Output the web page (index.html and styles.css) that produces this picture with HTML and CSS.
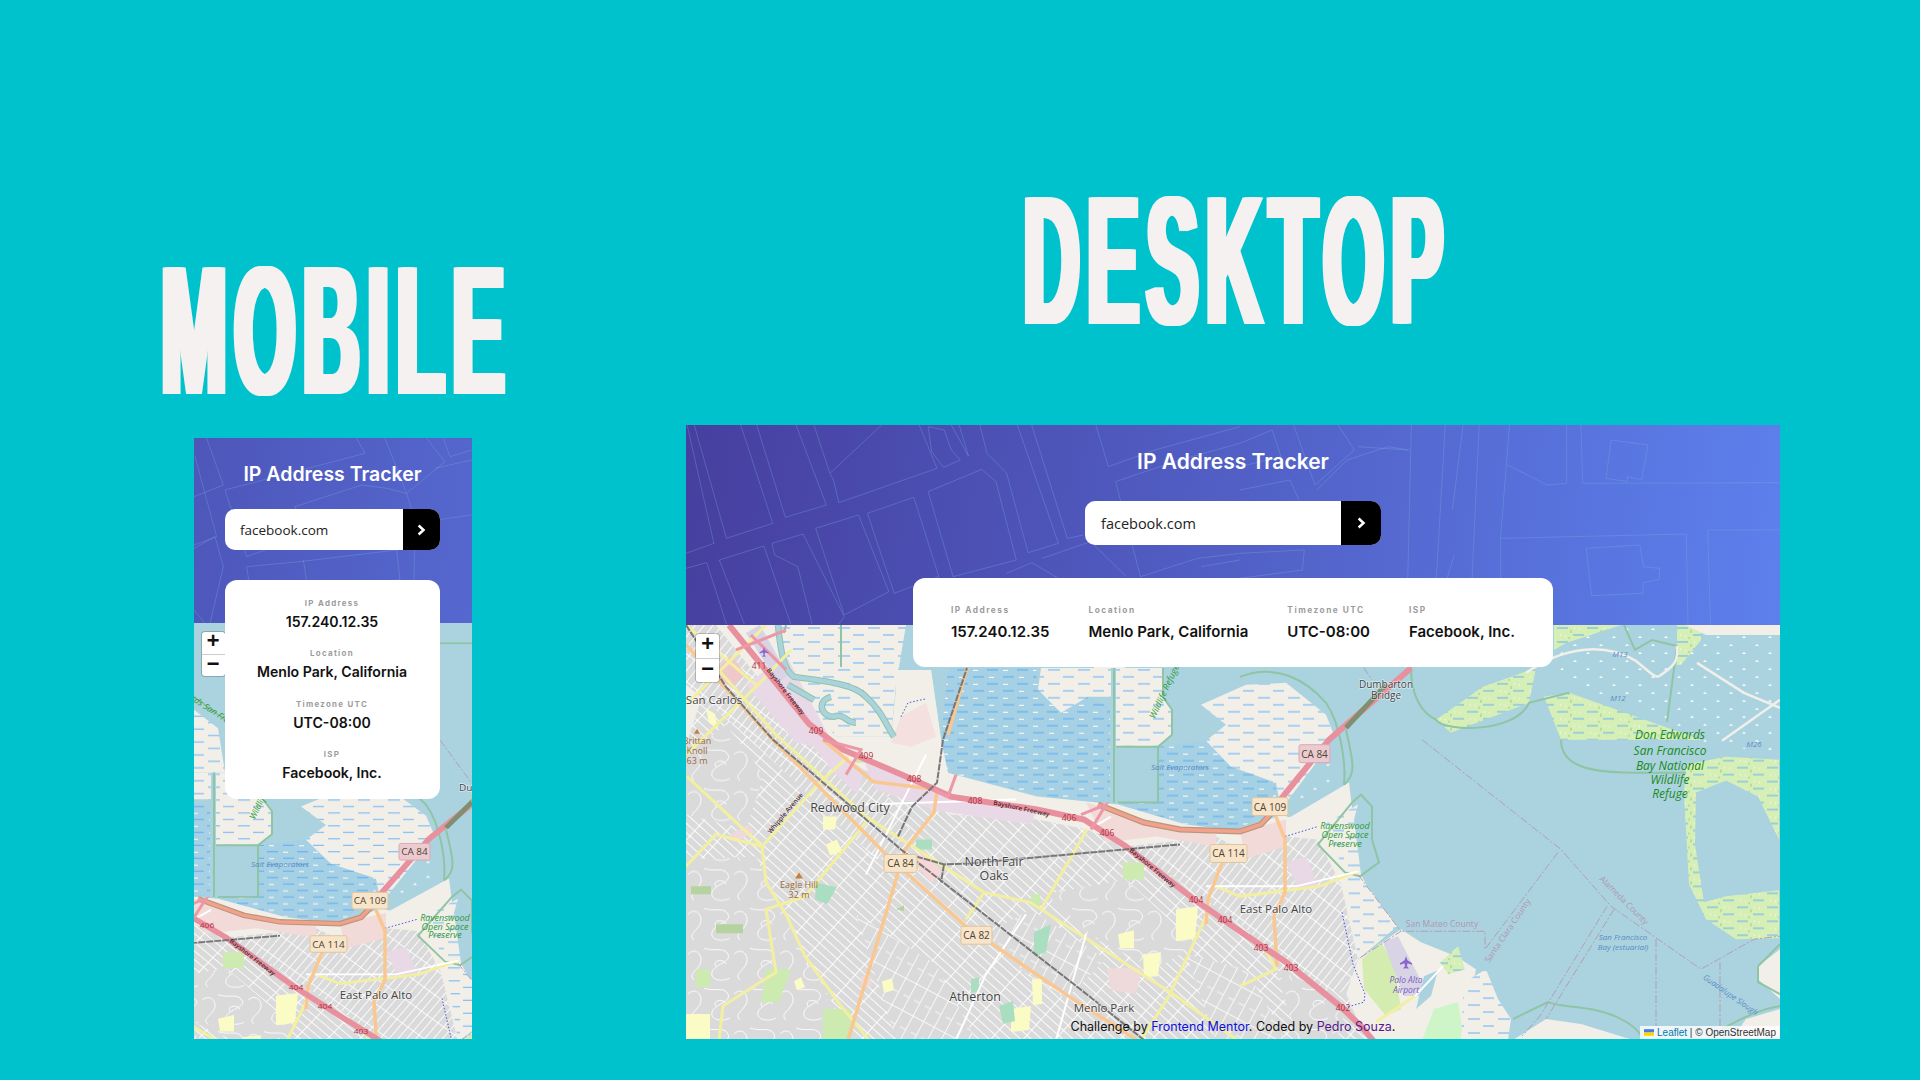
FILE: index.html
```html
<!DOCTYPE html>
<html lang="en">

<head>
    <meta charset="UTF-8">
    <meta name="viewport" content="width=device-width, initial-scale=1.0">
    <title>IP Address Tracker</title>
    <link rel="stylesheet" href="styles.css">
</head>

<body>
    <main class="stage">

        <section class="preview preview-mobile">
            <h2 class="preview-title title-mobile"><span>MOBILE</span></h2>
            <div class="frame frame-mobile">
                <header class="tracker-head">
                    <svg class="head-lines" viewBox="0 0 278 185" preserveAspectRatio="none" aria-hidden="true">
                        <g transform="translate(-14,-18) scale(.3333)">
                            <polyline points="80,55 130,195 42,230" />
                            <polyline points="45,110 110,350 42,375" />
                            <polyline points="135,210 200,410 380,345 345,260 545,195 620,205 680,220" />
                            <polyline points="135,210 555,100 530,55" />
                            <polyline points="615,55 680,220 795,125 740,55" />
                            <polyline points="790,55 810,110 875,90" />
                            <polyline points="765,145 875,120" />
                            <polyline points="680,220 705,300 700,610" />
                            <polyline points="42,385 105,350 130,440 90,610" />
                            <polyline points="42,570 75,610" />
                            <polyline points="200,440 360,425 650,390 660,480 370,500" />
                            <polyline points="200,440 225,610" />
                            <polyline points="370,420 400,610" />
                            <polyline points="770,300 875,285" />
                        </g>
                    </svg>
                    <h1 class="tracker-title">IP Address Tracker</h1>
                    <form class="search">
                        <span class="search-value">facebook.com</span>
                        <span class="search-btn">
                            <svg viewBox="0 0 11 14" aria-hidden="true"><path d="M2 1.5 8 7l-6 5.5" /></svg>
                        </span>
                    </form>
                </header>
                <div class="info-card">
                    <div class="stat"><span class="stat-label">IP Address</span><strong class="stat-value">157.240.12.35</strong></div>
                    <div class="stat"><span class="stat-label">Location</span><strong class="stat-value">Menlo Park, California</strong></div>
                    <div class="stat"><span class="stat-label">Timezone UTC</span><strong class="stat-value">UTC-08:00</strong></div>
                    <div class="stat"><span class="stat-label">ISP</span><strong class="stat-value">Facebook, Inc.</strong></div>
                </div>
                <div class="map">
                    <svg class="map-svg" viewBox="408 -119 278 451" preserveAspectRatio="none" role="img" aria-label="Map of Menlo Park">
                        <use href="#bay-map" />
                    </svg>
                    <div class="zoom-ctl"><span>+</span><span>−</span></div>
                </div>
            </div>
        </section>

        <section class="preview preview-desktop">
            <h2 class="preview-title title-desktop"><span>DESKTOP</span></h2>
            <div class="frame frame-desktop">
                <header class="tracker-head">
                    <svg class="head-lines" viewBox="0 0 1094 200" preserveAspectRatio="none" aria-hidden="true">
                        <g transform="translate(-6,-5) scale(.357,.3333)">
                            <polyline points="20,15 95,370 17,400" />
                            <polyline points="40,15 130,355 260,310 170,15" />
                            <polyline points="215,15 295,292 410,255 325,15" />
                            <polyline points="375,15 420,160 565,15" />
                            <polyline points="420,160 430,180 445,248 720,145 670,15" />
                            <polyline points="695,20 740,30 760,90 785,120 738,142 705,95 695,20" />
                            <polyline points="760,15 808,108 782,15" />
                            <polyline points="840,15 860,100 915,160 975,398 1060,370 945,15" />
                            <polyline points="985,15 1085,355 1130,345" />
                            <polyline points="695,215 845,148 885,185 942,420 765,470 695,215" />
                            <polyline points="525,280 655,232 725,470" />
                            <polyline points="525,280 600,520 725,470" />
                            <polyline points="380,325 500,285 585,515 460,585 380,325" />
                            <polyline points="258,370 345,342 460,590 445,612" />
                            <polyline points="258,370 265,405 330,440 370,612" />
                            <polyline points="110,420 235,378 310,612" />
                            <polyline points="110,420 180,612" />
                            <polyline points="17,445 75,428 130,612" />
                            <polyline points="1015,415 1150,365 1250,470" />
                            <polyline points="915,460 985,428 1060,475" />
                            <polyline points="1165,15 1200,140 1330,90 1568,20" />
                            <polyline points="1220,185 1400,120 1568,70" />
                            <polyline points="1220,185 1290,470" />
                            <polyline points="1290,470 1450,415 1568,400" />
                            <polyline points="1460,440 1568,420" />
                        </g>
                        <g transform="translate(554,-5) scale(.357,.3333)">
                            <polyline points="0,210 140,180 165,240" />
                            <polyline points="0,70 90,30 115,110 0,140" />
                            <polyline points="150,15 210,195 320,90 275,15" />
                            <polyline points="215,210 300,120 415,80 475,90" />
                            <polyline points="330,80 470,90" />
                            <polyline points="480,15 470,475" />
                            <polyline points="575,15 550,475" />
                            <polyline points="625,15 595,270" />
                            <polyline points="670,15 650,475" />
                            <polyline points="755,15 730,350 730,475" />
                            <polyline points="750,135 860,195 915,190 915,15" />
                            <polyline points="955,15 960,190 1510,188" />
                            <polyline points="1040,60 1143,75 1125,180 1085,170 1085,185 1025,175 1040,60" />
                            <polyline points="730,355 1250,342 1255,615" />
                            <polyline points="970,385 1120,375 1130,440 1175,445 1175,478 1130,488 1128,520 985,527 970,385" />
                            <polyline points="1310,330 1510,330" />
                            <polyline points="1310,330 1318,615" />
                            <polyline points="600,405 580,475" />
                            <polyline points="0,400 180,390 175,450 0,475" />
                        </g>
                    </svg>
                    <h1 class="tracker-title">IP Address Tracker</h1>
                    <form class="search">
                        <span class="search-value">facebook.com</span>
                        <span class="search-btn">
                            <svg viewBox="0 0 11 14" aria-hidden="true"><path d="M2 1.5 8 7l-6 5.5" /></svg>
                        </span>
                    </form>
                </header>
                <div class="info-card">
                    <div class="stat"><span class="stat-label">IP Address</span><strong class="stat-value">157.240.12.35</strong></div>
                    <div class="stat"><span class="stat-label">Location</span><strong class="stat-value">Menlo Park, California</strong></div>
                    <div class="stat"><span class="stat-label">Timezone UTC</span><strong class="stat-value">UTC-08:00</strong></div>
                    <div class="stat"><span class="stat-label">ISP</span><strong class="stat-value">Facebook, Inc.</strong></div>
                </div>
                <div class="map">
                    <svg class="map-svg" viewBox="0 0 1094 415" preserveAspectRatio="none" role="img" aria-label="Map of Menlo Park">
                        <defs>
                            <pattern id="wet" width="30" height="14" patternUnits="userSpaceOnUse">
                                <rect width="30" height="14" fill="#f2efe9" />
                                <path d="M2 3h12M17 10h11" stroke="#63b0f6" stroke-width="1" />
                            </pattern>
                            <pattern id="pond" width="30" height="14" patternUnits="userSpaceOnUse">
                                <rect width="30" height="14" fill="#a6d0e4" />
                                <path d="M1 3h11M17 10h11" stroke="#58aaf2" stroke-width="1" />
                                <path d="M17 3.5h5M3 10.5h5" stroke="#fff" stroke-width="1" />
                            </pattern>
                            <pattern id="marsh" width="30" height="14" patternUnits="userSpaceOnUse">
                                <rect width="30" height="14" fill="#d6efb6" />
                                <path d="M1 3h11M17 10h11" stroke="#63b0f6" stroke-width="1" />
                                <path d="M18 3h1M23 4h1M4 10h1M9 11h1" stroke="#fff" stroke-width="1.2" />
                                <path d="M15 5v3M13 12v2" stroke="#9cc98a" stroke-width="1" />
                            </pattern>
                            <pattern id="salt" width="26" height="16" patternUnits="userSpaceOnUse">
                                <rect width="26" height="16" fill="#aad3df" />
                                <path d="M3 5l2-2 2 2zM16 13l2-2 2 2z" fill="#fff" />
                            </pattern>
                            <pattern id="streets" width="24" height="7" patternUnits="userSpaceOnUse" patternTransform="rotate(42)">
                                <rect width="24" height="7" fill="#dadada" />
                                <path d="M0 .5H24M.5 0V7" stroke="#fff" stroke-width=".9" />
                            </pattern>
                            <pattern id="streets-alt" width="7" height="22" patternUnits="userSpaceOnUse" patternTransform="rotate(38)">
                                <rect width="7" height="22" fill="#dadada" />
                                <path d="M.5 0V22M0 .5H7" stroke="#fff" stroke-width=".9" />
                            </pattern>
                            <pattern id="streets-cross" width="30" height="12" patternUnits="userSpaceOnUse" patternTransform="rotate(-62)">
                                <rect width="30" height="12" fill="#dadada" />
                                <path d="M0 .5H30M.5 0V12M15 6V12" stroke="#fff" stroke-width=".8" />
                            </pattern>
                            <pattern id="curvy" width="46" height="40" patternUnits="userSpaceOnUse">
                                <rect width="46" height="40" fill="#dadada" />
                                <path d="M2 10c8-8 16 2 12 10s-12 10-6 16M18 4c10 4 20-2 24 6s-14 10-16 18 10 10 18 6M30 22c-4-6 8-8 10-2" fill="none" stroke="#fff" stroke-width=".9" />
                            </pattern>
                            <g id="bay-map">
                                <rect x="-10" y="-130" width="1120" height="560" fill="#aad3df" />

                                <!-- ponds and marsh -->
                                <path d="M868 25 880 18 935 0H1094V130L1020 118 960 85 880 60Z" fill="url(#salt)" />
                                <path d="M92 0H220L210 60 205 112H150L118 80 102 45Z" fill="url(#wet)" />
                                <path d="M262 43H350L352 65 375 88 402 72 424 82V177H401L351 170 262 148 255 115Z" fill="url(#pond)" />
                                <path d="M432 178H472V122L520 116 545 142 590 158V175L555 205 500 200 458 192Z" fill="url(#pond)" />
                                <path d="M430 43H477V72L486 85V110L472 122H430Z" fill="url(#wet)" />
                                <path d="M515 80 560 60 600 58 640 90 648 110 640 125 595 185 590 158 545 142 520 116 540 100Z" fill="url(#wet)" />
                                <path d="M408 -25 432 -5 439 43H408Z" fill="url(#wet)" />
                                <path d="M355 43H425V72L402 72 375 88 352 65Z" fill="url(#wet)" />
                                <path d="M556 178a15 12 0 1 1 28-6l-8 8z" fill="url(#pond)" />
                                <path d="M607 178 642 135 658 158 650 178 625 190Z" fill="url(#salt)" />
                                <path d="M600 195 663 158 668 200 632 212Z" fill="#f2efe9" />
                                <path d="M630 205 672 180 668 195 675 250 680 260 711 302 690 320 672 335 660 300 650 240Z" fill="url(#wet)" />
                                <path d="M750 95 797 62 850 43 843 78 765 108Z" fill="url(#marsh)" />
                                <path d="M858 72 883 68 1015 115H875Z" fill="url(#marsh)" />
                                <path d="M868 0H935L880 18 868 25Z" fill="url(#marsh)" />
                                <path d="M991 0H1015V15L995 40H991Z" fill="url(#marsh)" />
                                <path d="M1000 140 1040 132 1093 135V215L1072 172 1040 156 1010 168 1009 220 1018 278 1040 272 1093 266V314L1050 315 1020 295 1003 260 998 170Z" fill="url(#marsh)" />
                                <path d="M1000 0H1094V10H1020Z" fill="#f2efe9" />
                                <path d="M1072 342 1094 325V375L1072 355Z" fill="#f2efe9" />
                                <path d="M1045 416 1060 395 1094 385V416Z" fill="#f2efe9" />
                                <path d="M827 416 860 395 895 400 947 416Z" fill="#f2efe9" />

                                <!-- airport -->
                                <path d="M672 335 715 305 735 318 770 332 790 345 775 416 680 416 660 370Z" fill="#f2efe9" />
                                <path d="M676 335 695 318 708 340 715 385 700 392 678 365Z" fill="#d5ecb0" />
                                <path d="M697 318 712 312 738 362 735 372 718 372Z" fill="#d8d4e6" />
                                <path d="M736 416 748 385 772 378 778 416Z" fill="#cdf5c8" />
                                <path d="M754 338 772 322 779 345 762 350Z" fill="url(#marsh)" />
                                <path d="M778 358 800 345 812 375 825 395 822 416H775Z" fill="url(#wet)" />
                                <path d="M738 352 752 346 745 372 730 385Z" fill="#aad3df" />

                                <!-- town -->
                                <path d="M0 0H92L100 50 150 112H205L212 45H245L255 115 262 148 351 172 401 177 432 180 500 200 555 207 595 190 640 205 660 250 672 335 660 370 680 416H0Z" fill="#f2efe9" />
                                <path d="M0 120 20 60 60 60 130 125 190 150 265 190 351 195 401 205 470 230 554 300 640 350 660 370 680 416H0Z" fill="url(#streets)" />
                                <path d="M0 0H30L90 75 150 125 200 170 235 220 190 235 60 110 0 60Z" fill="url(#streets-alt)" />
                                <path d="M554 225 600 212 632 215 655 260 672 335 660 370 625 360 554 300Z" fill="url(#streets-alt)" />
                                <path d="M440 222 530 212 554 225 554 300 470 240Z" fill="url(#streets-alt)" />
                                <path d="M170 290 250 340 290 416H210Z" fill="url(#streets-cross)" />
                                <path d="M300 310 345 285 420 335 380 375 340 350Z" fill="url(#streets-cross)" />
                                <path d="M500 330 560 345 600 416H530Z" fill="url(#streets-cross)" />
                                <path d="M0 235 70 232 100 295 150 385 170 416H0Z" fill="url(#curvy)" />
                                <path d="M0 130 40 100 78 150 60 205 0 190Z" fill="url(#curvy)" />
                                <path d="M360 270 440 255 510 320 470 345 410 315Z" fill="url(#curvy)" />
                                <path d="M590 345 625 360 660 385 650 416H610Z" fill="url(#curvy)" />
                                <path d="M60 60 100 30 150 125 110 118Z M110 100 178 145 172 170 150 150Z" fill="#e9d9e7" />
                                <path d="M175 130 250 168 350 188 345 200 250 186 190 165Z" fill="#e9d9e7" />
                                <path d="M226 236 240 228 256 248 246 258Z" fill="#f6d6d6" />
                                <path d="M400 178 470 198 530 210 530 222 470 212 420 218Z" fill="#f2dad9" />
                                <path d="M554 207 600 195 600 222 560 234Z" fill="#f2dad9" />
                                <path d="M600 238 620 232 632 262 612 264Z" fill="#e9d9e7" />
                                <path d="M210 45H245L255 115 210 112Z" fill="#f2efe9" />
                                <path d="M215 92 240 78 250 112 225 122 205 118Z" fill="#f3e0df" />
                                <path d="M25 50 45 30 60 50 45 62Z" fill="#efc9c9" />
                                <path d="M60 8 74 0 102 50 92 58Z" fill="#d8d4e6" />

                                <!-- parks -->
                                <g class="map-parks">
                                    <path class="park-y" d="M137 192h14l-2 13h-12zM140 220l11-5 5 12-12 4zM490 285l22-3-3 32-19 3zM457 330l18-2-3 24-14 1zM432 310l16-4v18h-14zM346 355l10-1v26l-9 1zM325 385l20-3-2 24-18 2zM20 84l9 5 3 15-9-6zM196 357l10-3 2 12-10 3zM108 357l7-4 4 10-8 3zM0 390h24v25H0z" />
                                    <path class="park-g" d="M80 345h25l-12 33H75zM137 385h28v30h-28zM437 238h21v17h-21zM10 345h14v18H10zM345 270h9v12h-9zM170 130h10v8h-10z" />
                                    <path class="park-t" d="M130 258l21 5-10 17-12-5zM348 308l17-8-5 28-12 4zM313 382l14-5 2 20-12 3zM230 215h16v10h-16zM285 355l8-2v14l-8 2z" />
                                    <path class="park-h" d="M5 262h20v8H5zM30 300h27v9H30zM210 285l8-4v6z" />
                                    <path class="park-p" d="M421 344h35l-6 26-25-4zM175 352h10v10h-10zM44 210l18-10 6 8-20 10z" />
                                </g>

                                <g class="map-bound">
                                    <path d="M100 0 98 8M155 0V42" />
                                    <path d="M428 43V178" />
                                    <path d="M477 43V72L486 85V110L472 122" />
                                    <path d="M554 52C590 38 620 55 640 78 655 100 660 140 658 160" />
                                    <path d="M725 30V43C725 70 735 88 750 95 760 108 830 108 843 78L883 68" />
                                    <path d="M875 115C875 140 900 148 947 148H1000" />
                                    <path d="M632 220 666 178 675 170 686 182V215L693 238 674 252 659 248Z" />
                                    <path d="M938 0 949 25 966 15 991 21 981 97" />
                                    <path d="M408 -39 439 -14" />
                                    <path d="M654 -97H686" />
                                    <path d="M827 395 862 378C880 385 905 380 935 395 950 402 955 410 958 416" />
                                    <path d="M1072 342 1094 320M1094 370 1072 358 1072 342" />
                                    <path d="M1036 405C1060 392 1075 385 1094 382" />
                                    <path d="M660 105C668 140 670 150 658 160" />
                                    <path d="M430 122H472V178H432" />
                                </g>
                                <!-- tidal channels, drawn twice for the green bank -->
                                <g class="map-bank">
                                    <path d="M92 0C95 30 98 45 108 52 140 56 170 60 180 72 195 85 200 100 208 112" />
                                    <path d="M145 72C130 76 135 92 148 92 158 88 160 98 170 98" />
                                    <path d="M102 60 128 75" />
                                </g>
                                <g class="map-water">
                                    <path d="M92 0C95 30 98 45 108 52 140 56 170 60 180 72 195 85 200 100 208 112" />
                                    <path d="M145 72C130 76 135 92 148 92 158 88 160 98 170 98" />
                                    <path d="M102 60 128 75" />
                                </g>
                                <path d="M1011 38 1058 68 1094 83M1094 75 1036 116" class="map-track" />
                                <path d="M840 48C880 20 920 18 950 36 965 48 970 55 975 50 990 40 992 35 991 21" class="map-track" />

                                <!-- dashed boundaries -->
                                <g class="map-county">
                                    <path d="M736 115 875 225 925 282 1015 345 1068 315 1094 312" />
                                    <path d="M872 228 799 325V307H715" />
                                    <path d="M921 282 854 392 836 412M928 285 860 395" />
                                    <path d="M970 315V402M1034 338V402" />
                                    <path d="M654 8 686 55" />
                                    <path d="M672 250 711 302 715 307 672 335" />
                                </g>
                                <path d="M215 92 222 78 240 74M599 212 632 202M656 288 667 340 679 370 678 378 655 385" class="map-dots" />

                                <!-- roads -->
                                <g class="road road-yellow">
                                    <path d="M1 152 76 222 130 162 162 132" />
                                    <path d="M-6 248 30 210 76 222 80 258 101 292 119 332 155 382 183 416" />
                                    <path d="M33 416 37 382 90 348 80 285 119 272 180 198" />
                                    <path d="M28 40 90 110 180 192 298 268 344 278 490 372 551 416" />
                                    <path d="M0 80 50 30 80 0" />
                                    <path d="M0 130 70 62 105 25" />
                                    <path d="M70 60 0 0" />
                                    <path d="M401 205 355 285" />
                                    <path d="M522 288 483 372 455 416" />
                                    <path d="M530 262 554 272 633 262 672 247" />
                                    <path d="M554 362 590 345 575 318" />
                                    <path d="M690 398 729 372" />
                                    <path d="M298 268 280 295" />
                                </g>
                                <g class="road road-white">
                                    <path d="M729 372 757 342" />
                                    <path d="M672 247 610 262 520 262" />
                                    <path d="M180 180 330 175" />
                                    <path d="M405 204 425 192" />
                                    <path d="M340 290 300 350 270 416M400 310 370 416M240 130 180 250" />
                                </g>
                                <g class="road road-orange">
                                    <path d="M0 20 87 115 198 228 280 302 387 375 451 416" />
                                    <path d="M162 416 205 272 219 225 248 188 251 165 187 157 137 115" />
                                    <path d="M590 192 599 215V268L588 292 591 342" />
                                    <path d="M540 228 522 275 520 300" />
                                    <path d="M281 43 262 110" />
                                </g>
                                <path class="road-salmon-edge" d="M412 180 458 198 494 205 554 207 575 200 595 178" />
                                <path class="road-salmon" d="M412 180 458 198 494 205 554 207 575 200 595 178" />
                                <path class="road-motorway" d="M43 0 77 42 123 99 157 125 223 153 265 172 351 185 398 195 440 222 508 275 554 307 600 338 654 382 675 402 690 420" />
                                <path class="road-motorway" d="M592 178 643 115 725 43" />
                                <path class="road-ramp" d="M137 115 175 125 160 150M100 45 65 10M50 25 100 5M248 165 262 172 270 150M395 190 420 180 405 205" />
                                <path class="road-bridge" d="M660 103 700 60" />
                                <g class="road-rail">
                                    <path d="M0 0 40 62 87 115 215 225 398 368 458 416" />
                                    <path d="M230 232 258 240 283 239 494 220" />
                                    <path d="M212 212 226 182 251 158 257 115 281 43" />
                                    <path d="M258 240 255 258" />
                                </g>

                                <!-- labels -->
                                <g class="shield"><rect x="198" y="230" width="33" height="18" rx="2" /><text x="214.500" y="243">CA 84</text></g>
                                <g class="shield"><rect x="275" y="302" width="31" height="18" rx="2" /><text x="290.500" y="315">CA 82</text></g>
                                <g class="shield"><rect x="524" y="220" width="37" height="18" rx="2" /><text x="542.500" y="233">CA 114</text></g>
                                <g class="shield"><rect x="566" y="173" width="36" height="18" rx="2" /><text x="584" y="186">CA 109</text></g>
                                <g class="shield shield-pink"><rect x="613" y="120" width="31" height="18" rx="2" /><text x="628.500" y="133">CA 84</text></g>

                                <g class="label-ref">
                                    <text x="73" y="44">411</text><text x="130" y="109">409</text><text x="180" y="134">409</text>
                                    <text x="228" y="157">408</text><text x="289" y="179">408</text><text x="383" y="196">406</text>
                                    <text x="421" y="212">406</text><text x="510" y="279">404</text><text x="539" y="299">404</text>
                                    <text x="575" y="327">403</text><text x="605" y="347">403</text><text x="657" y="387">402</text>
                                </g>
                                <g class="label-road">
                                    <text transform="translate(98,68) rotate(52)">Bayshore Freeway</text>
                                    <text transform="translate(335,186) rotate(12)">Bayshore Freeway</text>
                                    <text transform="translate(465,245) rotate(40)">Bayshore Freeway</text>
                                    <text transform="translate(101,190) rotate(-50)">Whipple Avenue</text>
                                </g>

                                <g class="label-place">
                                    <text x="28" y="79">San Carlos</text>
                                    <text x="164" y="187" class="place-big">Redwood City</text>
                                    <text x="308" y="242" class="place-big">North Fair</text>
                                    <text x="308" y="256" class="place-big">Oaks</text>
                                    <text x="289" y="377" class="place-big">Atherton</text>
                                    <text x="418" y="388">Menlo Park</text>
                                    <text x="590" y="289">East Palo Alto</text>
                                    <text x="700" y="63" class="place-small">Dumbarton</text>
                                    <text x="700" y="74" class="place-small">Bridge</text>
                                </g>
                                <g class="label-peak">
                                    <path d="M113 248l4 6h-8zM11 104l3 5H8z" />
                                    <text x="113" y="264">Eagle Hill</text><text x="113" y="274">32 m</text>
                                    <text x="11" y="119">Brittan</text><text x="11" y="129">Knoll</text><text x="11" y="139">63 m</text>
                                </g>
                                <g class="label-reserve">
                                    <text x="659" y="204">Ravenswood</text><text x="659" y="214">Open Space</text><text x="659" y="223">Preserve</text>
                                    <text transform="translate(481,68) rotate(-65)">Wildlife Refuge</text>
                                    <text transform="translate(424,-22) rotate(35)">Edwards San Francisco</text>
                                </g>
                                <g class="label-refuge">
                                    <text x="984" y="114">Don Edwards</text><text x="984" y="130">San Francisco</text>
                                    <text x="984" y="145">Bay National</text><text x="984" y="159">Wildlife</text><text x="984" y="173">Refuge</text>
                                </g>
                                <g class="label-county">
                                    <text x="756" y="303">San Mateo County</text>
                                    <text transform="translate(824,308) rotate(-56)">Santa Clara County</text>
                                    <text transform="translate(936,278) rotate(45)">Alameda County</text>
                                </g>
                                <g class="label-water">
                                    <text x="937" y="316">San Francisco</text><text x="937" y="326">Bay (estuarial)</text>
                                    <text transform="translate(1043,373) rotate(35)">Guadalupe Slough</text>
                                    <text x="494" y="145">Salt Evaporators</text>
                                    <text x="934" y="32">M13</text><text x="932" y="76">M12</text><text x="1068" y="122">M26</text>
                                </g>
                                <g class="label-airport">
                                    <path d="M720 332l1.500 4 4.500 3v1.500l-4.500-1.500-.5 3 1.500 1.500v1l-2.500-.5-2.500.5v-1l1.500-1.500-.5-3-4.500 1.500V339l4.500-3z" />
                                    <path d="M78 22l1 3 3.500 2.500v1l-3.500-1-.5 2.500 1 1v1l-1.500-.5-1.500.5v-1l1-1-.5-2.500-3.500 1v-1l3.500-2.500z" />
                                    <text x="720" y="359">Palo Alto</text><text x="720" y="369">Airport</text>
                                </g>
                            </g>
                        </defs>
                        <use href="#bay-map" />
                    </svg>
                    <div class="zoom-ctl"><span>+</span><span>−</span></div>
                    <p class="credit">Challenge by <a class="credit-link" href="#">Frontend Mentor</a>. Coded by <a class="credit-visited" href="#">Pedro Souza</a>.</p>
                    <div class="attribution">
                        <svg class="flag" viewBox="0 0 12 8" aria-hidden="true"><rect width="12" height="4" fill="#4C7BE1" /><rect y="4" width="12" height="4" fill="#FFD500" /></svg>
                        <span><a href="#">Leaflet</a> | © OpenStreetMap</span>
                    </div>
                </div>
            </div>
        </section>

    </main>
</body>

</html>
```

FILE: styles.css
```css
* {
    box-sizing: border-box;
}

body {
    margin: 0;
    padding: 0;
    background-color: #00c2cc;
}

.stage {
    display: flex;
    align-items: flex-end;
    height: 1080px;
    padding: 0 0 41px 159px;
    gap: 180px;
    overflow: hidden;
}

.preview {
    display: flex;
    flex-direction: column;
    align-items: center;
}

.preview-mobile {
    width: 347px;
}

.preview-desktop {
    width: 1094px;
}

/* no condensed face installed, so the bold is squeezed and thickened sideways */
.preview-title {
    display: flex;
    justify-content: center;
    width: 100%;
    margin: 0;
    font-family: "Liberation Sans", sans-serif;
    font-size: 184px;
    line-height: 130px;
    font-weight: 700;
    letter-spacing: 18px;
    color: #f5f1f0;
    white-space: nowrap;
    text-shadow: 9px 0 0 #f5f1f0, -9px 0 0 #f5f1f0, 4.500px 0 0 #f5f1f0, -4.500px 0 0 #f5f1f0;
}

.preview-title span {
    display: inline-block;
    flex: none;
}

.title-mobile {
    margin-bottom: 43px;
}

.title-mobile span {
    transform: translateX(4px) scaleX(.426);
}

.title-desktop {
    margin-bottom: 100px;
}

.title-desktop span {
    transform: translateX(4px) scaleX(.422);
}

.frame {
    position: relative;
    overflow: hidden;
    display: flex;
    flex-direction: column;
}

.frame-mobile {
    width: 278px;
    height: 601px;
}

.frame-desktop {
    width: 1094px;
    height: 614px;
}

.tracker-head {
    position: relative;
    flex: none;
    display: flex;
    flex-direction: column;
    align-items: center;
}

.frame-mobile .tracker-head {
    height: 185px;
    padding-top: 25px;
    background: linear-gradient(100deg, #4e56b9, #5568cf);
}

.frame-desktop .tracker-head {
    height: 200px;
    padding-top: 25px;
    background: linear-gradient(96deg, #463f9f, #5d80ec);
}

.head-lines {
    position: absolute;
    top: 0;
    left: 0;
    width: 100%;
    height: 100%;
}

.head-lines polyline {
    fill: none;
    stroke: #7db4e6;
    stroke-opacity: .3;
    stroke-width: 1;
    vector-effect: non-scaling-stroke;
}

.tracker-title {
    position: relative;
    margin: 0;
    font-family: Inter, sans-serif;
    font-weight: 600;
    color: #fff;
}

.frame-mobile .tracker-title {
    font-size: 19.500px;
    line-height: 22px;
}

.frame-desktop .tracker-title {
    font-size: 21px;
    line-height: 24px;
}

.search {
    position: relative;
    display: flex;
    margin: 0;
    overflow: hidden;
    background-color: #fff;
    border-radius: 10px;
    font-family: "Open Sans", sans-serif;
    color: #222;
}

.frame-mobile .search {
    width: 215px;
    height: 41px;
    margin-top: 24px;
    font-size: 13.500px;
}

.frame-desktop .search {
    width: 296px;
    height: 44px;
    margin-top: 27px;
    font-size: 14.500px;
}

.search-value {
    flex: 1;
    display: flex;
    align-items: center;
}

.frame-mobile .search-value {
    padding-left: 15px;
}

.frame-desktop .search-value {
    padding-left: 16px;
}

.search-btn {
    flex: none;
    display: flex;
    align-items: center;
    justify-content: center;
    background-color: #000;
}

.frame-mobile .search-btn {
    width: 37px;
}

.frame-desktop .search-btn {
    width: 40px;
}

.search-btn svg {
    width: 9px;
    height: 12px;
}

.search-btn path {
    fill: none;
    stroke: #fff;
    stroke-width: 3;
}

.info-card {
    position: absolute;
    z-index: 5;
    background-color: #fff;
    border-radius: 12px;
    font-family: Inter, sans-serif;
    color: #111;
}

.frame-mobile .info-card {
    top: 142px;
    left: 31px;
    width: 215px;
    height: 219px;
    padding-top: 17px;
    display: flex;
    flex-direction: column;
    align-items: center;
    gap: 15.400px;
    text-align: center;
}

.frame-desktop .info-card {
    top: 153px;
    left: 227px;
    width: 640px;
    height: 89px;
    padding: 26px 38px 0;
    display: flex;
    justify-content: space-between;
}

.stat {
    display: flex;
    flex-direction: column;
}

.frame-mobile .stat {
    gap: 3px;
}

.frame-desktop .stat {
    gap: 6px;
}

.stat-label {
    font-weight: 700;
    color: #9c9c9c;
    line-height: 12px;
}

.frame-mobile .stat-label {
    font-size: 7.900px;
    letter-spacing: 1.300px;
}

.frame-desktop .stat-label {
    font-size: 8.300px;
    letter-spacing: 1.500px;
}

.stat-value {
    font-weight: 600;
    white-space: nowrap;
}

.frame-mobile .stat-value {
    font-size: 14.100px;
    line-height: 20px;
}

.frame-desktop .stat-value {
    font-size: 15px;
    line-height: 20px;
}

.map {
    position: relative;
    flex: 1;
    overflow: hidden;
}

.map-svg {
    display: block;
    width: 100%;
    height: 100%;
}

.zoom-ctl {
    position: absolute;
    z-index: 3;
    display: flex;
    flex-direction: column;
    width: 23px;
    background-color: #fff;
    border-radius: 3px;
    box-shadow: 0 0 0 1px rgba(0, 0, 0, .2);
    font-family: "Liberation Mono", monospace;
    font-weight: 700;
    font-size: 22px;
    color: #111;
    text-align: center;
}

.zoom-ctl span + span {
    border-top: 1px solid #ccc;
}

.frame-mobile .zoom-ctl {
    top: 9px;
    left: 8px;
}

.frame-mobile .zoom-ctl span {
    height: 22px;
    line-height: 22px;
}

.frame-desktop .zoom-ctl {
    top: 9px;
    left: 10px;
}

.frame-desktop .zoom-ctl span {
    height: 24px;
    line-height: 24px;
}

.credit {
    position: absolute;
    z-index: 3;
    left: 0;
    right: 0;
    bottom: 3px;
    margin: 0;
    font-family: Inter, sans-serif;
    font-size: 12.500px;
    line-height: 18px;
    color: #111;
    text-align: center;
}

.credit-link {
    color: #1010e0;
    text-decoration: none;
}

.credit-visited {
    color: #551a8b;
    text-decoration: none;
}

.attribution {
    position: absolute;
    z-index: 3;
    right: 0;
    bottom: 0;
    display: flex;
    align-items: center;
    gap: 3px;
    height: 13px;
    padding: 0 4px;
    background-color: rgba(255, 255, 255, .8);
    font-family: "Liberation Sans", sans-serif;
    font-size: 10px;
    line-height: 13px;
    color: #333;
    white-space: nowrap;
}

.attribution a {
    color: #0078a8;
    text-decoration: none;
}

.flag {
    width: 10px;
    height: 7px;
}

/* map layers */
.road,
.road-motorway,
.road-ramp,
.road-rail,
.road-salmon,
.road-salmon-edge,
.road-bridge,
.map-bound,
.map-bank,
.map-water,
.map-county,
.map-track,
.map-dots {
    fill: none;
}

.road-yellow {
    stroke: #f2f0a0;
    stroke-width: 3;
}

.road-white {
    stroke: #fff;
    stroke-width: 2;
}

.road-orange {
    stroke: #f9c78f;
    stroke-width: 3.500;
}

.road-motorway {
    stroke: #e9909f;
    stroke-width: 6;
}

.road-ramp {
    stroke: #ec98a6;
    stroke-width: 3;
}

.road-salmon-edge {
    stroke: #b9977a;
    stroke-width: 6;
}

.road-salmon {
    stroke: #f3a18c;
    stroke-width: 3.500;
}

.road-bridge {
    stroke: #7f8f70;
    stroke-width: 5;
}

.road-rail {
    stroke: #777;
    stroke-width: 2;
    stroke-dasharray: 7 1;
}

.map-bound {
    stroke: #8fc4a4;
    stroke-width: 2;
}

.map-bank {
    stroke: #8fc4a4;
    stroke-width: 6.500;
}

.map-water {
    stroke: #aad3df;
    stroke-width: 4.500;
}

.map-track {
    stroke: #f2efe9;
    stroke-width: 2.500;
}

.map-county {
    stroke: #b59cb4;
    stroke-width: 1;
    stroke-dasharray: 8 2 2 2;
}

.map-dots {
    stroke: #4050e0;
    stroke-width: 1;
    stroke-dasharray: 1.500 2;
}

.park-y {
    fill: #fbfbc6;
}

.park-g {
    fill: #cdebb0;
}

.park-t {
    fill: #a9dfc0;
}

.park-h {
    fill: #b5d29f;
}

.park-p {
    fill: #eedada;
}

.shield rect {
    fill: #f7e4c9;
    stroke: #dcc6a0;
}

.shield-pink rect {
    fill: #eccbd0;
    stroke: #d9a8b2;
}

.shield text,
.label-place text,
.label-peak text,
.label-reserve text,
.label-refuge text,
.label-county text,
.label-water text,
.label-airport text,
.label-ref text,
.label-road text {
    font-family: "Open Sans", sans-serif;
    text-anchor: middle;
}

.shield text {
    font-size: 10px;
    fill: #4d4436;
}

.label-place text {
    font-size: 11.500px;
    fill: #444;
    paint-order: stroke;
    stroke: rgba(255, 255, 255, .55);
    stroke-width: 1.500px;
}

.label-place .place-big {
    font-size: 12.500px;
}

.label-place .place-small {
    font-size: 10px;
}

.label-peak text {
    font-size: 9px;
    fill: #9a6a3a;
}

.label-peak path {
    fill: #c77f3a;
}

.label-reserve text {
    font-size: 9px;
    font-style: italic;
    fill: #2c9a35;
}

.label-refuge text {
    font-size: 12px;
    font-style: italic;
    fill: #1c8a1c;
}

.label-county text {
    font-size: 8.500px;
    fill: #b096b4;
}

.label-water text {
    font-size: 8px;
    font-style: italic;
    fill: #5a8ac4;
}

.label-airport text {
    font-size: 8.500px;
    font-style: italic;
    fill: #7a5cc0;
}

.label-airport path {
    fill: #8a66cc;
}

.label-ref text {
    font-size: 8.500px;
    fill: #b03040;
}

.label-road text {
    font-size: 6.500px;
    font-weight: 600;
    fill: #4a2a30;
}
```
